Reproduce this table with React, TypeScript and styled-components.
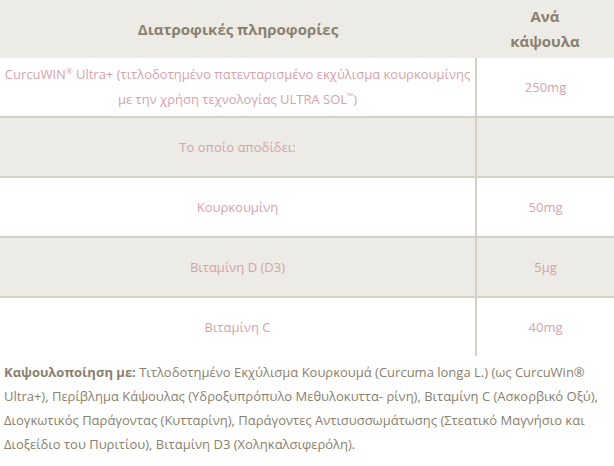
import React from "react";
import styled, { createGlobalStyle } from "styled-components";

const Global = createGlobalStyle`
  html, body { margin: 0; padding: 0; background: #ffffff; }
  body { font-family: "Open Sans", "Noto Sans", sans-serif; }
`;

const Wrap = styled.div`
  width: 614px;
`;

const Table = styled.table`
  width: 614px;
  border-collapse: collapse;
  table-layout: fixed;
  font-family: "Open Sans", "Noto Sans", sans-serif;
`;

const Row = styled.tr<{ $shaded?: boolean }>`
  background: ${(p) => (p.$shaded ? "#ecebe5" : "#ffffff")};
  border-bottom: 2px solid #d6d1c7;
  &:last-child { border-bottom: none; }
`;

const Head = styled.th`
  height: 58px;
  padding: 0 4px;
  color: #8a8070;
  font-size: 15px;
  font-weight: 700;
  line-height: 25px;
  text-align: center;
  vertical-align: middle;
`;

const Cell = styled.td`
  height: 58px;
  padding: 0 4px;
  color: #d7a2ac;
  font-size: 13px;
  line-height: 25px;
  text-align: center;
  vertical-align: middle;
  & + & { border-left: 2px solid #d6d1c7; }
  sup { font-size: 8px; line-height: 0; vertical-align: 5px; }
`;

const Note = styled.p`
  margin: 0;
  padding: 4px 4px 0 4px;
  color: #8a8070;
  font-size: 13px;
  line-height: 24px;
  b { font-weight: 700; }
`;

const rows = [
  { name: null, value: "250mg", shaded: false },
  { name: "Το οποίο αποδίδει:", value: "", shaded: true },
  { name: "Κουρκουμίνη", value: "50mg", shaded: false },
  { name: "Βιταμίνη D (D3)", value: "5μg", shaded: true },
  { name: "Βιταμίνη C", value: "40mg", shaded: false },
];

export default function App() {
  return (
    <Wrap>
      <Global />
      <Table>
        <colgroup>
          <col style={{ width: 476 }} />
          <col style={{ width: 138 }} />
        </colgroup>
        <thead>
          <Row $shaded>
            <Head>Διατροφικές πληροφορίες</Head>
            <Head>
              Ανά
              <br />
              κάψουλα
            </Head>
          </Row>
        </thead>
        <tbody>
          {rows.map((r, i) => (
            <Row key={i} $shaded={r.shaded}>
              <Cell>
                {r.name ?? (
                  <>
                    CurcuWIN<sup>®</sup> Ultra+ (τιτλοδοτημένο πατενταρισμένο εκχύλισμα κουρκουμίνης
                    με την χρήση τεχνολογίας ULTRA SOL<sup>™</sup>)
                  </>
                )}
              </Cell>
              <Cell>{r.value}</Cell>
            </Row>
          ))}
        </tbody>
      </Table>
      <Note>
        <b>Καψουλοποίηση με:</b> Τιτλοδοτημένο Εκχύλισμα Κουρκουμά (Curcuma longa L.) (ως CurcuWin®
        Ultra+), Περίβλημα Κάψουλας (Υδροξυπρόπυλο Μεθυλοκυττα- ρίνη), Βιταμίνη C (Ασκορβικό Οξύ),
        Διογκωτικός Παράγοντας (Κυτταρίνη), Παράγοντες Αντισυσσωμάτωσης (Στεατικό Μαγνήσιο και
        Διοξείδιο του Πυριτίου), Βιταμίνη D3 (Χοληκαλσιφερόλη).
      </Note>
    </Wrap>
  );
}
